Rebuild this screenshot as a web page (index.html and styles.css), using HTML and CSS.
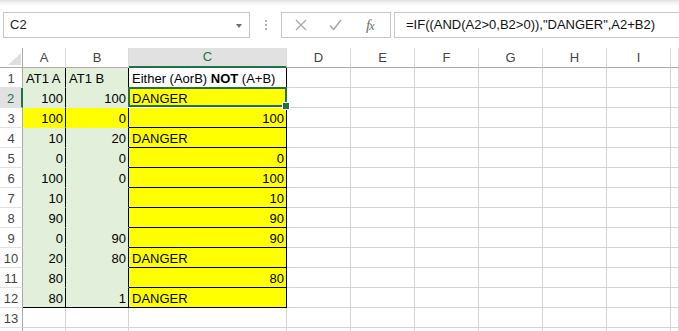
FILE: index.html
```html
<!DOCTYPE html>
<html lang="en">
<head>
    <meta charset="UTF-8">
    <meta name="viewport" content="width=device-width, initial-scale=1.0">
    <title>Either A or B</title>
    <link rel="stylesheet" href="styles.css">
</head>
<body>

    <div class="ribbon-edge"></div>

    <div class="formula-bar">
        <div class="name-box">
            <span>C2</span>
            <span class="caret"></span>
        </div>
        <div class="grip"><i></i><i></i><i></i></div>
        <div class="fx-buttons">
            <svg class="btn-icon" width="12" height="12" viewBox="0 0 12 12">
                <path d="M1 1 L11 11 M11 1 L1 11" stroke="#a8a8a8" stroke-width="1.3" fill="none"/>
            </svg>
            <svg class="btn-icon" width="13" height="12" viewBox="0 0 13 12">
                <path d="M1 6.5 L4.5 10.5 L12 1" stroke="#a8a8a8" stroke-width="1.5" fill="none"/>
            </svg>
            <span class="fx"><i>f</i><span>x</span></span>
        </div>
        <div class="formula">=IF((AND(A2&gt;0,B2&gt;0)),"DANGER",A2+B2)</div>
    </div>

    <div class="sheet">
        <div class="row">
            <div class="cell corner"><span class="tri"></span></div>
            <div class="cell hd">A</div>
            <div class="cell hd">B</div>
            <div class="cell hd sel">C</div>
            <div class="cell hd">D</div>
            <div class="cell hd">E</div>
            <div class="cell hd">F</div>
            <div class="cell hd">G</div>
            <div class="cell hd">H</div>
            <div class="cell hd">I</div>
            <div class="cell hd"></div>
        </div>

        <div class="row">
            <div class="cell rn">1</div>
            <div class="cell g">AT1 A</div>
            <div class="cell g">AT1 B</div>
            <div class="cell c blank">Either (AorB) <b>NOT</b> (A+B)</div>
            <div class="cell"></div><div class="cell"></div><div class="cell"></div>
            <div class="cell"></div><div class="cell"></div><div class="cell"></div><div class="cell"></div>
        </div>

        <div class="row">
            <div class="cell rn sel">2</div>
            <div class="cell g num">100</div>
            <div class="cell g num">100</div>
            <div class="cell c active">DANGER<span class="selection"><span class="handle"></span></span></div>
            <div class="cell"></div><div class="cell"></div><div class="cell"></div>
            <div class="cell"></div><div class="cell"></div><div class="cell"></div><div class="cell"></div>
        </div>

        <div class="row">
            <div class="cell rn">3</div>
            <div class="cell y num">100</div>
            <div class="cell y num">0</div>
            <div class="cell c num">100</div>
            <div class="cell"></div><div class="cell"></div><div class="cell"></div>
            <div class="cell"></div><div class="cell"></div><div class="cell"></div><div class="cell"></div>
        </div>

        <div class="row">
            <div class="cell rn">4</div>
            <div class="cell g num">10</div>
            <div class="cell g num">20</div>
            <div class="cell c">DANGER</div>
            <div class="cell"></div><div class="cell"></div><div class="cell"></div>
            <div class="cell"></div><div class="cell"></div><div class="cell"></div><div class="cell"></div>
        </div>

        <div class="row">
            <div class="cell rn">5</div>
            <div class="cell g num">0</div>
            <div class="cell g num">0</div>
            <div class="cell c num">0</div>
            <div class="cell"></div><div class="cell"></div><div class="cell"></div>
            <div class="cell"></div><div class="cell"></div><div class="cell"></div><div class="cell"></div>
        </div>

        <div class="row">
            <div class="cell rn">6</div>
            <div class="cell g num">100</div>
            <div class="cell g num">0</div>
            <div class="cell c num">100</div>
            <div class="cell"></div><div class="cell"></div><div class="cell"></div>
            <div class="cell"></div><div class="cell"></div><div class="cell"></div><div class="cell"></div>
        </div>

        <div class="row">
            <div class="cell rn">7</div>
            <div class="cell g num">10</div>
            <div class="cell g num"></div>
            <div class="cell c num">10</div>
            <div class="cell"></div><div class="cell"></div><div class="cell"></div>
            <div class="cell"></div><div class="cell"></div><div class="cell"></div><div class="cell"></div>
        </div>

        <div class="row">
            <div class="cell rn">8</div>
            <div class="cell g num">90</div>
            <div class="cell g num"></div>
            <div class="cell c num">90</div>
            <div class="cell"></div><div class="cell"></div><div class="cell"></div>
            <div class="cell"></div><div class="cell"></div><div class="cell"></div><div class="cell"></div>
        </div>

        <div class="row">
            <div class="cell rn">9</div>
            <div class="cell g num">0</div>
            <div class="cell g num">90</div>
            <div class="cell c num">90</div>
            <div class="cell"></div><div class="cell"></div><div class="cell"></div>
            <div class="cell"></div><div class="cell"></div><div class="cell"></div><div class="cell"></div>
        </div>

        <div class="row">
            <div class="cell rn">10</div>
            <div class="cell g num">20</div>
            <div class="cell g num">80</div>
            <div class="cell c">DANGER</div>
            <div class="cell"></div><div class="cell"></div><div class="cell"></div>
            <div class="cell"></div><div class="cell"></div><div class="cell"></div><div class="cell"></div>
        </div>

        <div class="row">
            <div class="cell rn">11</div>
            <div class="cell g num">80</div>
            <div class="cell g num"></div>
            <div class="cell c num">80</div>
            <div class="cell"></div><div class="cell"></div><div class="cell"></div>
            <div class="cell"></div><div class="cell"></div><div class="cell"></div><div class="cell"></div>
        </div>

        <div class="row">
            <div class="cell rn">12</div>
            <div class="cell g num last">80</div>
            <div class="cell g num last">1</div>
            <div class="cell c">DANGER</div>
            <div class="cell"></div><div class="cell"></div><div class="cell"></div>
            <div class="cell"></div><div class="cell"></div><div class="cell"></div><div class="cell"></div>
        </div>

        <div class="row">
            <div class="cell rn">13</div>
            <div class="cell"></div><div class="cell"></div><div class="cell"></div><div class="cell"></div>
            <div class="cell"></div><div class="cell"></div><div class="cell"></div>
            <div class="cell"></div><div class="cell"></div><div class="cell"></div>
        </div>

        <div class="row">
            <div class="cell rn"></div>
            <div class="cell"></div><div class="cell"></div><div class="cell"></div><div class="cell"></div>
            <div class="cell"></div><div class="cell"></div><div class="cell"></div>
            <div class="cell"></div><div class="cell"></div><div class="cell"></div>
        </div>
    </div>

</body>
</html>
```

FILE: styles.css
```css
body {
    font-family: "Liberation Sans", Arial, sans-serif;
    font-size: 13px;
    margin: 0;
    padding: 0;
    background-color: #fff;
    color: #000;
    width: 679px;
    height: 331px;
    overflow: hidden;
}
.ribbon-edge {
    height: 6px;
    background: linear-gradient(#e3e3e3, #f6f6f6 60%, #fff);
}

/* formula bar */
.formula-bar {
    display: flex;
    height: 26px;
    margin-top: 6px;
    padding-left: 3px;
}
.name-box {
    width: 247px;
    box-sizing: border-box;
    border: 1px solid #c6c6c6;
    display: flex;
    align-items: center;
    justify-content: space-between;
    padding: 0 7px 0 6px;
    line-height: 24px;
    color: #222;
}
.caret {
    width: 0;
    height: 0;
    border-left: 3px solid transparent;
    border-right: 3px solid transparent;
    border-top: 4px solid #6f6f6f;
    margin-top: 1px;
}
.grip {
    width: 31px;
    display: flex;
    flex-direction: column;
    align-items: center;
    justify-content: center;
    gap: 2px;
}
.grip i {
    width: 2px;
    height: 2px;
    background: #b4b4b4;
}
.fx-buttons {
    width: 110px;
    box-sizing: border-box;
    border: 1px solid #c6c6c6;
    display: flex;
    align-items: center;
    padding-left: 13px;
}
.btn-icon {
    margin-right: 22px;
}
.btn-icon + .btn-icon {
    margin-right: 24px;
}
.fx {
    font-family: "Liberation Serif", "Times New Roman", serif;
    color: #6c6c6c;
    font-size: 15px;
    letter-spacing: -1px;
}
.fx span {
    font-style: italic;
    font-size: 12px;
}
.formula {
    flex: 1;
    margin-left: 3px;
    border: 1px solid #c6c6c6;
    border-right: none;
    padding-left: 11px;
    line-height: 24px;
    white-space: nowrap;
    overflow: hidden;
    color: #111;
}

/* sheet */
.sheet {
    margin-top: 10px;
    height: 283px;
    overflow: hidden;
}
.row {
    display: grid;
    grid-template-columns: 23px 43px 63px 158px repeat(6, 64px) 8px;
}
.cell {
    box-sizing: border-box;
    height: 20px;
    border-right: 1px solid #d4d4d4;
    border-bottom: 1px solid #d4d4d4;
    padding: 2px 2px 0 3px;
    line-height: 17px;
    white-space: nowrap;
    overflow: hidden;
}
.num {
    text-align: right;
    padding-right: 2px;
}
.corner {
    display: flex;
    align-items: flex-end;
    justify-content: flex-end;
    padding: 0 1px 2px 0;
    border-right-color: #ababab;
    border-bottom-color: #ababab;
}
.tri {
    width: 13px;
    height: 12px;
    background: #dfdfdf;
    clip-path: polygon(100% 0, 100% 100%, 0 100%);
}
.hd {
    text-align: center;
    padding: 0;
    line-height: 19px;
    color: #444;
    border-right-color: #dadada;
    border-bottom-color: #ababab;
}
.hd.sel {
    background: #e1e1e1;
    color: #217346;
    border-bottom: 2px solid #217346;
    line-height: 18px;
}
.rn {
    text-align: center;
    padding: 2px 0 0;
    color: #444;
    border-right-color: #ababab;
    border-bottom-color: #e1e1e1;
}
.rn.sel {
    background: #e1e1e1;
    color: #217346;
    border-right: 2px solid #217346;
}
.g {
    background: #e2efda;
    border-right-color: #000;
    border-bottom-color: #e2efda;
}
.y {
    background: #ffff00;
    border-right-color: #000;
    border-bottom-color: #ffff00;
}
.g.last {
    border-bottom-color: #000;
}
.c {
    background: #ffff00;
    border-right-color: #000;
    border-bottom-color: #000;
}
.c.blank {
    background: #fff;
}

/* active cell outline */
.active {
    position: relative;
    overflow: visible;
}
.selection {
    position: absolute;
    left: -1px;
    top: -1px;
    width: 159px;
    height: 20px;
    box-sizing: border-box;
    border: 2px solid #217346;
    box-shadow: 0 1px 0 #fff;
}
.handle {
    position: absolute;
    right: -5px;
    bottom: -5px;
    width: 6px;
    height: 6px;
    background: #217346;
    border: 1px solid #fff;
}
```
